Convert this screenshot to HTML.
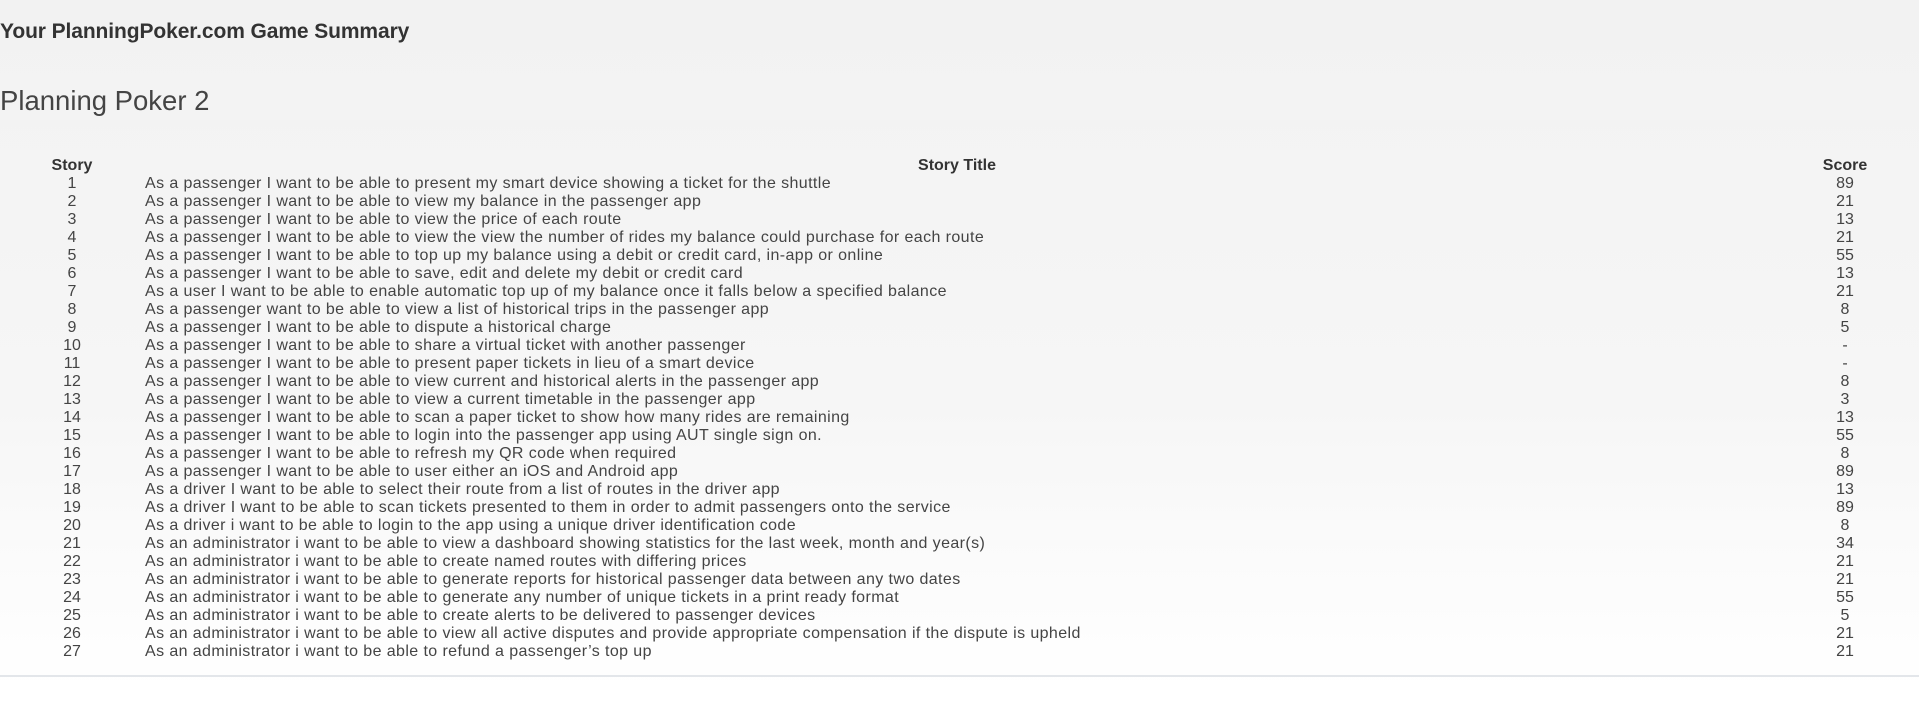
<!DOCTYPE html>
<html><head><meta charset="utf-8"><style>
html,body{margin:0;padding:0}
body{width:1919px;height:704px;overflow:hidden;background:linear-gradient(#f2f2f2 0px,#f6f6f6 400px,#fff 690px);font-family:"Liberation Sans",sans-serif;color:#444;position:relative}
h1{position:absolute;left:0;top:20px;margin:0;font-size:21px;font-weight:bold;color:#333;letter-spacing:-0.1px}
h2{position:absolute;left:0;top:85px;margin:0;font-size:27.5px;font-weight:normal;color:#444}
.t{position:absolute;top:157px;left:0;width:1919px;font-size:16px;line-height:18px}
.r{height:18px;position:relative;white-space:nowrap}
.a{position:absolute;left:32px;width:80px;text-align:center}
.b{position:absolute;left:145px;letter-spacing:0.4px}
.c{position:absolute;left:1805px;width:80px;text-align:center}
.h{font-weight:bold;color:#333}
.h .b{left:857px;width:200px;text-align:center;letter-spacing:0}
hr{position:absolute;top:675px;left:0;width:1919px;margin:0;border:0;height:2px;background:#e3e6ea}
</style></head><body>
<h1>Your PlanningPoker.com Game Summary</h1>
<h2>Planning Poker 2</h2>
<div class="t">
<div class="r h"><span class="a">Story</span><span class="b">Story Title</span><span class="c">Score</span></div>
<div class="r"><span class="a">1</span><span class="b">As a passenger I want to be able to present my smart device showing a ticket for the shuttle</span><span class="c">89</span></div>
<div class="r"><span class="a">2</span><span class="b">As a passenger I want to be able to view my balance in the passenger app</span><span class="c">21</span></div>
<div class="r"><span class="a">3</span><span class="b">As a passenger I want to be able to view the price of each route</span><span class="c">13</span></div>
<div class="r"><span class="a">4</span><span class="b">As a passenger I want to be able to view the view the number of rides my balance could purchase for each route</span><span class="c">21</span></div>
<div class="r"><span class="a">5</span><span class="b">As a passenger I want to be able to top up my balance using a debit or credit card, in-app or online</span><span class="c">55</span></div>
<div class="r"><span class="a">6</span><span class="b">As a passenger I want to be able to save, edit and delete my debit or credit card</span><span class="c">13</span></div>
<div class="r"><span class="a">7</span><span class="b">As a user I want to be able to enable automatic top up of my balance once it falls below a specified balance</span><span class="c">21</span></div>
<div class="r"><span class="a">8</span><span class="b">As a passenger want to be able to view a list of historical trips in the passenger app</span><span class="c">8</span></div>
<div class="r"><span class="a">9</span><span class="b">As a passenger I want to be able to dispute a historical charge</span><span class="c">5</span></div>
<div class="r"><span class="a">10</span><span class="b">As a passenger I want to be able to share a virtual ticket with another passenger</span><span class="c">-</span></div>
<div class="r"><span class="a">11</span><span class="b">As a passenger I want to be able to present paper tickets in lieu of a smart device</span><span class="c">-</span></div>
<div class="r"><span class="a">12</span><span class="b">As a passenger I want to be able to view current and historical alerts in the passenger app</span><span class="c">8</span></div>
<div class="r"><span class="a">13</span><span class="b">As a passenger I want to be able to view a current timetable in the passenger app</span><span class="c">3</span></div>
<div class="r"><span class="a">14</span><span class="b">As a passenger I want to be able to scan a paper ticket to show how many rides are remaining</span><span class="c">13</span></div>
<div class="r"><span class="a">15</span><span class="b">As a passenger I want to be able to login into the passenger app using AUT single sign on.</span><span class="c">55</span></div>
<div class="r"><span class="a">16</span><span class="b">As a passenger I want to be able to refresh my QR code when required</span><span class="c">8</span></div>
<div class="r"><span class="a">17</span><span class="b">As a passenger I want to be able to user either an iOS and Android app</span><span class="c">89</span></div>
<div class="r"><span class="a">18</span><span class="b">As a driver I want to be able to select their route from a list of routes in the driver app</span><span class="c">13</span></div>
<div class="r"><span class="a">19</span><span class="b">As a driver I want to be able to scan tickets presented to them in order to admit passengers onto the service</span><span class="c">89</span></div>
<div class="r"><span class="a">20</span><span class="b">As a driver i want to be able to login to the app using a unique driver identification code</span><span class="c">8</span></div>
<div class="r"><span class="a">21</span><span class="b">As an administrator i want to be able to view a dashboard showing statistics for the last week, month and year(s)</span><span class="c">34</span></div>
<div class="r"><span class="a">22</span><span class="b">As an administrator i want to be able to create named routes with differing prices</span><span class="c">21</span></div>
<div class="r"><span class="a">23</span><span class="b">As an administrator i want to be able to generate reports for historical passenger data between any two dates</span><span class="c">21</span></div>
<div class="r"><span class="a">24</span><span class="b">As an administrator i want to be able to generate any number of unique tickets in a print ready format</span><span class="c">55</span></div>
<div class="r"><span class="a">25</span><span class="b">As an administrator i want to be able to create alerts to be delivered to passenger devices</span><span class="c">5</span></div>
<div class="r"><span class="a">26</span><span class="b">As an administrator i want to be able to view all active disputes and provide appropriate compensation if the dispute is upheld</span><span class="c">21</span></div>
<div class="r"><span class="a">27</span><span class="b">As an administrator i want to be able to refund a passenger’s top up</span><span class="c">21</span></div>
</div>
<hr>
</body></html>
